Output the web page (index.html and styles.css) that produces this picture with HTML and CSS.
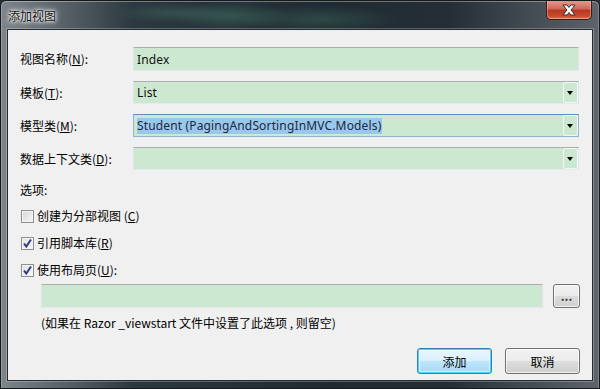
FILE: index.html
```html
<!DOCTYPE html>
<html lang="zh-CN">
<head>
    <meta charset="UTF-8">
    <title>添加视图</title>
    <link rel="stylesheet" href="styles.css">
</head>
<body>
    <div class="window">
        <div class="titlebar">
            <span class="title">添加视图</span>
            <div class="close">
                <svg width="18" height="12" viewBox="0 0 18 12">
                    <path d="M3 1h4l2 2.5 2-2.5h4l-4 5 4 5h-4l-2-2.5-2 2.5H3l4-5z" fill="#fff" stroke="#3b2a2a" stroke-width="1" stroke-linejoin="round"/>
                </svg>
            </div>
        </div>

        <div class="client">
            <div class="fields">
                <label class="lbl">视图名称(<u>N</u>):</label>
                <div class="field tall">Index</div>

                <label class="lbl">模板(<u>T</u>):</label>
                <div class="field combo">List<span class="drop"></span></div>

                <label class="lbl">模型类(<u>M</u>):</label>
                <div class="field combo focus"><span class="sel">Student (PagingAndSortingInMVC.Models)</span><span class="drop"></span></div>

                <label class="lbl">数据上下文类(<u>D</u>):</label>
                <div class="field combo"><span class="drop"></span></div>
            </div>

            <div class="section">选项:</div>

            <div class="check-row first">
                <span class="box"></span>
                <span>创建为分部视图 (<u>C</u>)</span>
            </div>
            <div class="check-row">
                <span class="box checked">
                    <svg width="11" height="11" viewBox="0 0 11 11"><path d="M2 5.5l2.3 3L9 1.5" fill="none" stroke="#2d3a8a" stroke-width="2"/></svg>
                </span>
                <span>引用脚本库(<u>R</u>)</span>
            </div>
            <div class="check-row">
                <span class="box checked">
                    <svg width="11" height="11" viewBox="0 0 11 11"><path d="M2 5.5l2.3 3L9 1.5" fill="none" stroke="#2d3a8a" stroke-width="2"/></svg>
                </span>
                <span>使用布局页(<u>U</u>):</span>
            </div>

            <div class="layout-row">
                <div class="field layout-path"></div>
                <button class="btn browse">...</button>
            </div>
            <div class="hint">(如果在 Razor _viewstart 文件中设置了此选项 , 则留空)</div>

            <div class="actions">
                <button class="btn primary">添加</button>
                <button class="btn">取消</button>
            </div>
        </div>
    </div>
</body>
</html>
```

FILE: styles.css
```css
body {
    margin: 0;
    background: #2a3036;
    font-family: "Noto Sans CJK SC", sans-serif;
    font-size: 12px;
    color: #000;
}

.window {
    width: 600px;
    height: 389px;
    box-sizing: border-box;
    display: flex;
    flex-direction: column;
    border: 1px solid #15191c;
    border-radius: 6px 6px 0 0;
    background:
        radial-gradient(ellipse 60px 14px at 230px 15px, rgba(70, 130, 105, 0.45), transparent),
        radial-gradient(ellipse 80px 14px at 320px 18px, rgba(70, 130, 105, 0.35), transparent),
        radial-gradient(ellipse 60px 10px at 170px 12px, rgba(70, 130, 105, 0.35), transparent),
        linear-gradient(90deg, #7d858b 0%, #5a636a 10%, #2c3840 22%, #1f2a32 55%, #252e37 75%, #5d646b 100%);
    box-shadow: inset 0 1px 0 rgba(255, 255, 255, 0.35), inset 1px 0 0 rgba(255, 255, 255, 0.2), inset -1px 0 0 rgba(255, 255, 255, 0.2);
    overflow: hidden;
}

.titlebar {
    height: 28px;
    display: flex;
    align-items: flex-start;
}

.title {
    margin: 7px 0 0 7px;
    line-height: 16px;
    color: #111;
    text-shadow: 0 0 6px #fff, 0 0 4px #fff, 0 0 2px #fff;
}

.close {
    margin-left: auto;
    margin-right: 7px;
    margin-top: -1px;
    width: 46px;
    height: 20px;
    box-sizing: border-box;
    border: 1px solid #3d1a14;
    border-top: none;
    border-radius: 0 0 5px 5px;
    background: linear-gradient(#e3a195 0%, #d2685a 45%, #b43a22 55%, #c94a2e 85%, #e07a56 100%);
    box-shadow: inset 0 0 0 1px rgba(255, 220, 200, 0.4);
    display: flex;
    align-items: center;
    justify-content: center;
}

.client {
    margin: 0 6px 7px;
    flex: 1;
    border: 1px solid #262b30;
    background: #f0f0f0;
    padding: 17px 12px 0 12px;
    box-shadow: 0 0 0 1px rgba(255, 255, 255, 0.25);
}

.fields {
    display: grid;
    grid-template-columns: 113px 1fr;
    grid-template-rows: 24px 23px 23px 23px;
    row-gap: 10px;
    margin-right: 1px;
}

.lbl {
    display: flex;
    align-items: center;
    line-height: 16px;
}

.field {
    position: relative;
    box-sizing: border-box;
    background: #cde8d0;
    border: 1px solid #dde3e8;
    border-top-color: #abadb3;
    border-bottom-color: #e3e9ef;
    display: flex;
    align-items: center;
    padding-left: 3px;
    font-family: "Noto Sans", "Noto Sans CJK SC", sans-serif;
    font-size: 12px;
    letter-spacing: 0.15px;
    color: #111;
}

.field.focus {
    border-color: #8fb5d6;
    border-top-color: #5b8fc0;
}

.sel {
    background: #99c8ea;
    color: #1a2a40;
    line-height: 16px;
    padding-right: 1px;
}

.drop {
    position: absolute;
    right: 0;
    top: 0;
    bottom: 0;
    width: 15px;
    box-sizing: border-box;
    border: 1px solid #f4f8f4;
    border-radius: 2px;
    background: #cde8d0;
}

.drop::after {
    content: "";
    position: absolute;
    left: 3px;
    top: 8px;
    border-left: 3.5px solid transparent;
    border-right: 3.5px solid transparent;
    border-top: 4px solid #000;
}

.section {
    margin-top: 12px;
    line-height: 16px;
}

.check-row {
    display: flex;
    align-items: center;
    height: 16px;
    margin-top: 11px;
    padding-left: 1px;
    line-height: 16px;
}

.check-row.first {
    margin-top: 10px;
}

.box {
    width: 13px;
    height: 13px;
    box-sizing: border-box;
    border: 1px solid #8e8f8f;
    background: linear-gradient(135deg, #d8d8d8, #f6f6f6);
    box-shadow: inset 0 0 0 1px #f4f4f4;
    margin-right: 3px;
    display: flex;
    align-items: center;
    justify-content: center;
}

.box.checked {
    background: linear-gradient(135deg, #e0e0e0, #fafafa);
}

.layout-row {
    display: flex;
    gap: 10px;
    margin-top: 6px;
    margin-left: 21px;
    height: 24px;
}

.layout-path {
    flex: 1;
}

.btn {
    box-sizing: border-box;
    border: 1px solid #707070;
    border-radius: 3px;
    background: linear-gradient(#f2f2f2 0%, #ebebeb 50%, #dddddd 50%, #cfcfcf 100%);
    box-shadow: inset 0 0 0 1px rgba(255, 255, 255, 0.7);
    font-family: "Noto Sans CJK SC", sans-serif;
    font-size: 12px;
    color: #000;
    padding: 0;
}

.browse {
    width: 27px;
    height: 24px;
    font-weight: bold;
    line-height: 10px;
    color: #333;
}

.hint {
    margin-top: 7px;
    margin-left: 21px;
    line-height: 16px;
}

.actions {
    display: flex;
    justify-content: flex-end;
    gap: 13px;
    margin-top: 17px;
}

.actions .btn {
    width: 75px;
    height: 26px;
}

.btn.primary {
    border-color: #3c7fb1;
    background: linear-gradient(#eaf6fd 0%, #d9f0fc 50%, #bee6fd 50%, #a7d9f5 100%);
    box-shadow: inset 0 0 0 1px #48d2f8, inset 0 0 0 2px rgba(255, 255, 255, 0.5);
}
```
